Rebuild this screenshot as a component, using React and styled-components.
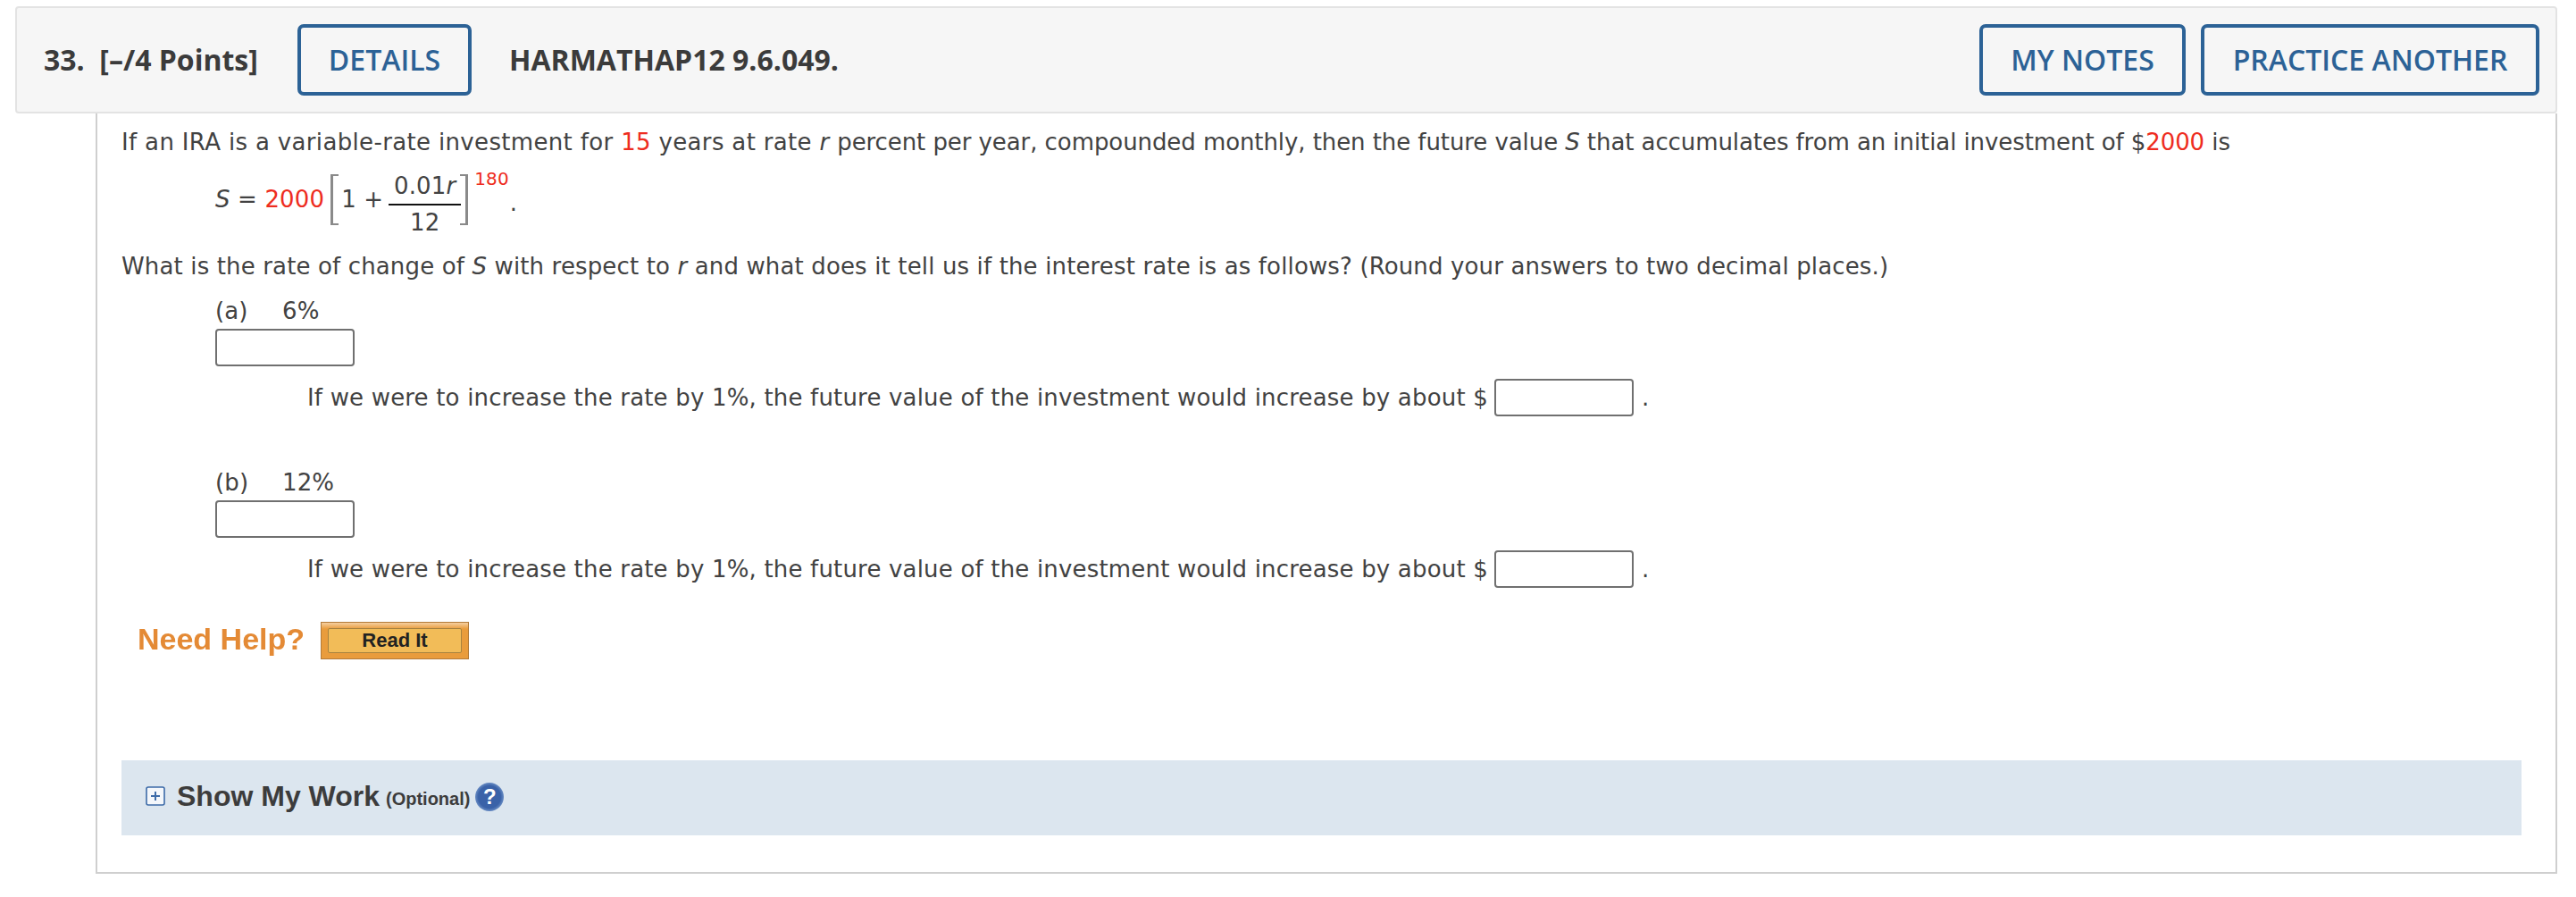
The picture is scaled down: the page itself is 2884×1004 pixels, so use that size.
import React from "react";
import styled, { createGlobalStyle } from "styled-components";

const Global = createGlobalStyle`
  html, body { margin: 0; background: #fff; }
  body { font-family: "DejaVu Sans", sans-serif; color: #424242; }
`;
const Page = styled.div`
  width: 2884px; height: 1004px; box-sizing: border-box; padding: 7px 21px 0 17px;
`;
const Header = styled.header`
  box-sizing: border-box; height: 120px; display: flex; align-items: center;
  background: #f6f6f6; border: 2px solid #e3e3e3; border-radius: 4px;
  padding: 0 18px 0 30px;
  font-family: "Open Sans", sans-serif; font-weight: 600; font-size: 32px; color: #3b3b3b;
`;
const Points = styled.div`width: 284px; white-space: pre; font-weight: 700; margin-top: -2px;`;
const QId = styled.div`margin: -2px 0 0 42px; flex: 1; font-weight: 700;`;
const HeaderButton = styled.div`
  box-sizing: border-box; height: 80px; display: flex; align-items: center; justify-content: center;
  width: ${p => p.$w}px; margin-left: ${p => p.$ml || 0}px; padding-bottom: 2px;
  border: 4px solid #2c6296; border-radius: 7px; color: #2c6296;
`;
const Body = styled.main`
  box-sizing: border-box; height: 851px; margin-left: 90px;
  border: solid #cfcfcf; border-width: 0 2px 2px 2px; padding: 12px 38px 0 27px;
  font-size: 26px; letter-spacing: 0.14px;
`;
const Line = styled.div`
  height: 40px; line-height: 40px; white-space: pre; margin-top: ${p => p.$mt || 0}px;
`;
const Spaced = styled.span`letter-spacing: ${p => p.$ls}px;`;
const Red = styled.span`color: #ee2c20;`;
const Var = styled.i`font-style: oblique;`;
const Formula = styled.div`
  display: flex; align-items: center; height: 64px; margin: 12px 0 0 105px; white-space: pre;
`;
const Bracket = styled.span`
  box-sizing: border-box; display: block; width: 9px; height: 57px; margin: ${p => p.$m};
  border: solid #8a8a8a; border-width: 2px 0 2px 3px;
  ${p => p.$right && "border-width: 2px 3px 2px 0;"}
`;
const Fraction = styled.span`
  display: flex; flex-direction: column; align-items: center; width: 81px; margin: 10px 0 0 6px;
  line-height: 30px;
`;
const Numer = styled.span`padding-bottom: 5px; border-bottom: 2px solid #111; width: 100%; text-align: center;`;
const Denom = styled.span`padding-top: 4px;`;
const Sup = styled.span`font-size: 20px; color: #ee2c20; align-self: flex-start; margin: -6px 0 0 7px; line-height: 30px;`;
const Dot = styled.span`margin: 8px 0 0 1px;`;
const Part = styled.div`margin-left: 105px;`;
const PartHead = styled.div`height: 40px; line-height: 40px; white-space: pre; margin-top: ${p => p.$mt}px; display: flex;`;
const PartLabel = styled.span`width: 75px;`;
const Box = styled.div`
  box-sizing: border-box; width: 156px; height: 42px; border: 2px solid #707070; border-radius: 4px; background: #fff; flex: none;
  margin-left: ${p => p.$ml || 0}px;
`;
const Sentence = styled.div`
  display: flex; align-items: center; height: 42px; white-space: pre; margin: ${p => p.$mt}px 0 0 103px; letter-spacing: 0.18px;
`;
const Period = styled.span`margin-left: 9px;`;
const Help = styled.div`display: flex; align-items: center; height: 42px; margin: 38px 0 0 18px;`;
const NeedHelp = styled.span`
  font: bold 34px "Liberation Sans", sans-serif; letter-spacing: 0; color: #e48a35; filter: blur(0.5px); width: 205px; white-space: pre; margin-top: -3px;
`;
const ReadIt = styled.div`
  box-sizing: border-box; width: 166px; height: 42px; padding: 6px 7px; border: 1px solid #b27a38;
  background: linear-gradient(#f5cfa0 0, #e99c3c 7px, #e99c3c 100%);
`;
const ReadItInner = styled.div`
  box-sizing: border-box; height: 28px; background: #f2bc58; border: 1px solid #a7823f; border-radius: 2px;
  display: flex; align-items: center; justify-content: center;
  font: bold 22px "Liberation Sans", sans-serif; letter-spacing: 0; color: #222;
`;
const WorkBand = styled.div`
  height: 84px; margin-top: 113px; background: #dce6ef; display: flex; align-items: center; padding-left: 27px;
  font-family: "Liberation Sans", sans-serif; font-weight: bold; color: #3c3c3c; letter-spacing: 0;
`;
const PlusIcon = styled.svg`margin-top: -5px; flex: none;`;
const WorkTitle = styled.span`font-size: 32px; margin: -4px 0 0 13px; white-space: pre;`;
const Optional = styled.span`font-size: 20px; margin: 2px 0 0 7px;`;
const Q = styled.span`
  width: 32px; height: 32px; border-radius: 50%; margin: -2px 0 0 6px; display: flex; align-items: center; justify-content: center;
  background: radial-gradient(circle, #3a62a8 55%, #7d9fd0 78%, #4a70b0 100%); color: #fff; font-size: 24px;
`;
const Plus = () => (
  <PlusIcon width="22" height="22" viewBox="0 0 22 22">
    <rect x="1" y="1" width="20" height="20" rx="2" fill="#f4f7fb" stroke="#3d6ba8" strokeWidth="1.6" />
    <path d="M11 6v10M6 11h10" stroke="#3d6ba8" strokeWidth="2" />
  </PlusIcon>
);
const S = "If we were to increase the rate by 1%, the future value of the investment would increase by about $";

export default function App() {
  return (
    <Page>
      <Global />
      <Header>
        <Points>33.  [–/4 Points]</Points>
        <HeaderButton $w={195}>DETAILS</HeaderButton>
        <QId>HARMATHAP12 9.6.049.</QId>
        <HeaderButton $w={231}>MY NOTES</HeaderButton>
        <HeaderButton $w={379} $ml={17}>PRACTICE ANOTHER</HeaderButton>
      </Header>
      <Body>
        <Line>
          <Spaced $ls={0.34}>If an IRA is a variable-rate investment for <Red>15</Red> years at rate <Var>r</Var> </Spaced>
          <Spaced $ls={-0.08}>percent per year, compounded monthly, then the future value <Var>S</Var> that accumulates from an initial investment of $<Red>2000</Red> is</Spaced>
        </Line>
        <Formula>
          <Var>S</Var> = <Red>2000</Red>
          <Bracket $m="0 3px 0 7px" />1 +
          <Fraction><Numer>0.01<Var>r</Var></Numer><Denom>12</Denom></Fraction>
          <Bracket $right $m="0 0 0 -1px" />
          <Sup>180</Sup>
          <Dot>.</Dot>
        </Formula>
        <Line $mt={23}>What is the rate of change of <Var>S</Var> with respect to <Var>r</Var> and what does it tell us if the interest rate is as follows? (Round your answers to two decimal places.)</Line>
        <Part>
          <PartHead $mt={10}><PartLabel>(a)</PartLabel>6%</PartHead>
          <Box />
          <Sentence $mt={14}>{S}<Box $ml={7} /><Period>.</Period></Sentence>
          <PartHead $mt={54}><PartLabel>(b)</PartLabel>12%</PartHead>
          <Box />
          <Sentence $mt={14}>{S}<Box $ml={7} /><Period>.</Period></Sentence>
        </Part>
        <Help><NeedHelp>Need Help?</NeedHelp><ReadIt><ReadItInner>Read It</ReadItInner></ReadIt></Help>
        <WorkBand>
          <Plus />
          <WorkTitle>Show My Work</WorkTitle>
          <Optional>(Optional)</Optional>
          <Q>?</Q>
        </WorkBand>
      </Body>
    </Page>
  );
}
